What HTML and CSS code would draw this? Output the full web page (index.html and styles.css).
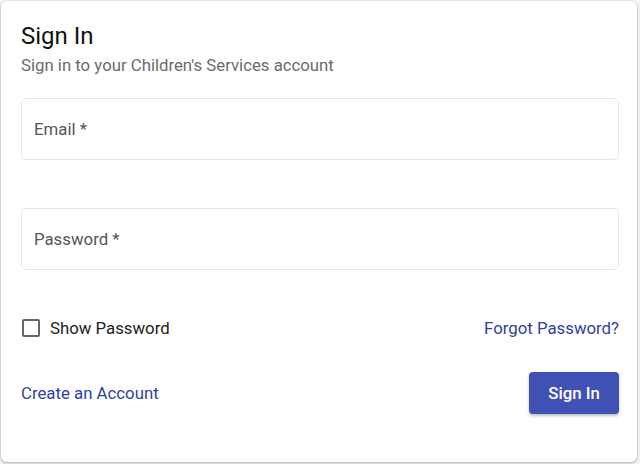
FILE: index.html
```html
<!DOCTYPE html>
<html>
<head>
<meta charset="utf-8">
<link rel="stylesheet" href="styles.css">
</head>
<body>
<div class="card">
  <h1 class="title">Sign In</h1>
  <p class="subtitle">Sign in to your Children's Services account</p>
  <div class="field"><span class="label">Email *</span></div>
  <div class="field field-second"><span class="label">Password *</span></div>
  <div class="row row-options">
    <label class="check"><span class="box"></span><span>Show Password</span></label>
    <a class="link">Forgot Password?</a>
  </div>
  <div class="row row-actions">
    <a class="link">Create an Account</a>
    <button class="btn">Sign In</button>
  </div>
</div>
</body>
</html>
```
FILE: styles.css
```css
html, body { margin: 0; padding: 0; background: #f4f4f4; }
body { font-family: Roboto, "Noto Sans", sans-serif; width: 640px; height: 464px; overflow: hidden; }
.card {
  margin: 1px 0 0 1px;
  width: 636px;
  height: 461px;
  box-sizing: border-box;
  background: #fff;
  border-radius: 6px;
  box-shadow: 0 1px 3px rgba(0,0,0,0.3), 0 0 1px rgba(0,0,0,0.15);
  padding: 20px 18px 0 20px;
}
.title { margin: 0; font-size: 24px; font-weight: 400; color: #111; line-height: 30px; }
.subtitle { margin: 3px 0 0 0; font-size: 16.75px; color: #6b6b6b; line-height: 22px; }
.field {
  margin-top: 22px;
  height: 62px;
  box-sizing: border-box;
  border: 1px solid #e6e6e6;
  border-radius: 6px;
  display: flex;
  align-items: center;
  padding-left: 12px;
}
.field-second { margin-top: 48px; }
.label { font-size: 16.8px; color: #555; }
.row { display: flex; justify-content: space-between; align-items: center; }
.row-options { margin-top: 46px; height: 24px; }
.row-actions { margin-top: 32px; height: 42px; }
.check { display: flex; align-items: center; font-size: 16.8px; color: #222; }
.box { width: 18px; height: 18px; box-sizing: border-box; border: 2px solid #666; border-radius: 2px; margin: 0 10px 0 1px; }
.link { color: #303f9f; font-size: 16.8px; }
.btn {
  width: 90px; height: 42px;
  background: #3f51b5; color: #fff;
  border: none; border-radius: 4px;
  font-family: Roboto, sans-serif; font-size: 16.8px; font-weight: 500;
  box-shadow: 0 2px 3px rgba(0,0,0,0.25);
}
```
